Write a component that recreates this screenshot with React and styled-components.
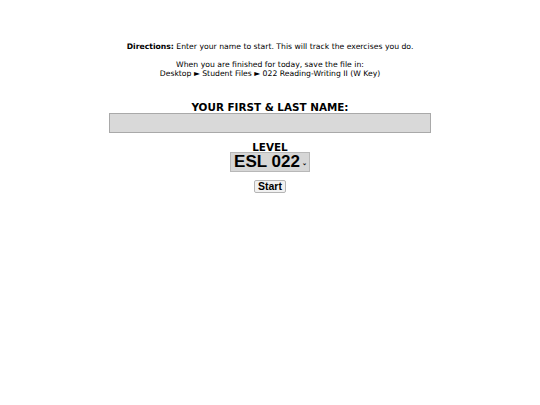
import React from "react";
import styled, { createGlobalStyle } from "styled-components";

const Global = createGlobalStyle`
  html, body { margin: 0; padding: 0; background: #fff; }
  body { font-family: "DejaVu Sans", Verdana, sans-serif; color: #000; }
`;

const Page = styled.div`
  display: flex;
  flex-direction: column;
  align-items: center;
  padding-top: 42px;
`;

const Para = styled.p`
  margin: 0 0 ${(p) => p.$mb || 0}px;
  font-size: 7.7px;
  line-height: 9px;
  text-align: center;
`;

const Heading = styled.div`
  font-size: 10.4px;
  font-weight: bold;
  line-height: ${(p) => p.$lh || 12}px;
  margin-top: ${(p) => p.$mt || 0}px;
  text-align: center;
`;

const NameInput = styled.input`
  box-sizing: border-box;
  width: 322px;
  height: 20px;
  background: #d9d9d9;
  border: 1px solid #a9a9a9;
  margin: 0;
  padding: 0 4px;
  font-family: inherit;
  font-size: 10px;
  outline: none;
`;

const SelectBox = styled.div`
  box-sizing: border-box;
  display: flex;
  align-items: center;
  height: 20px;
  padding: 0 2px 0 3px;
  background: #d6d6d6;
  border: 1px solid #b8b8b8;
  font-family: "Liberation Sans", Arial, sans-serif;
  font-weight: bold;
  font-size: 17px;
  line-height: 20px;
`;

const Caret = styled.span`
  font-size: 6px;
  margin-left: 2px;
  margin-top: 2px;
`;

const StartButton = styled.button`
  box-sizing: border-box;
  margin-top: 8px;
  height: 13px;
  padding: 0 3px;
  background: #f1f1f1;
  border: 1px solid #b5b5b5;
  border-radius: 2px;
  font-family: "Liberation Sans", Arial, sans-serif;
  font-weight: bold;
  font-size: 10.5px;
  line-height: 11px;
  color: #000;
`;

export default function App() {
  return (
    <>
      <Global />
      <Page>
        <Para $mb={9}>
          <b>Directions:</b> Enter your name to start. This will track the exercises you do.
        </Para>
        <Para>When you are finished for today, save the file in:</Para>
        <Para>Desktop ► Student Files ► 022 Reading-Writing II (W Key)</Para>
        <Heading $mt={23} $lh={12}>YOUR FIRST &amp; LAST NAME:</Heading>
        <NameInput type="text" />
        <Heading $mt={9} $lh={10}>LEVEL</Heading>
        <SelectBox>
          ESL 022<Caret>⌄</Caret>
        </SelectBox>
        <StartButton>Start</StartButton>
      </Page>
    </>
  );
}
